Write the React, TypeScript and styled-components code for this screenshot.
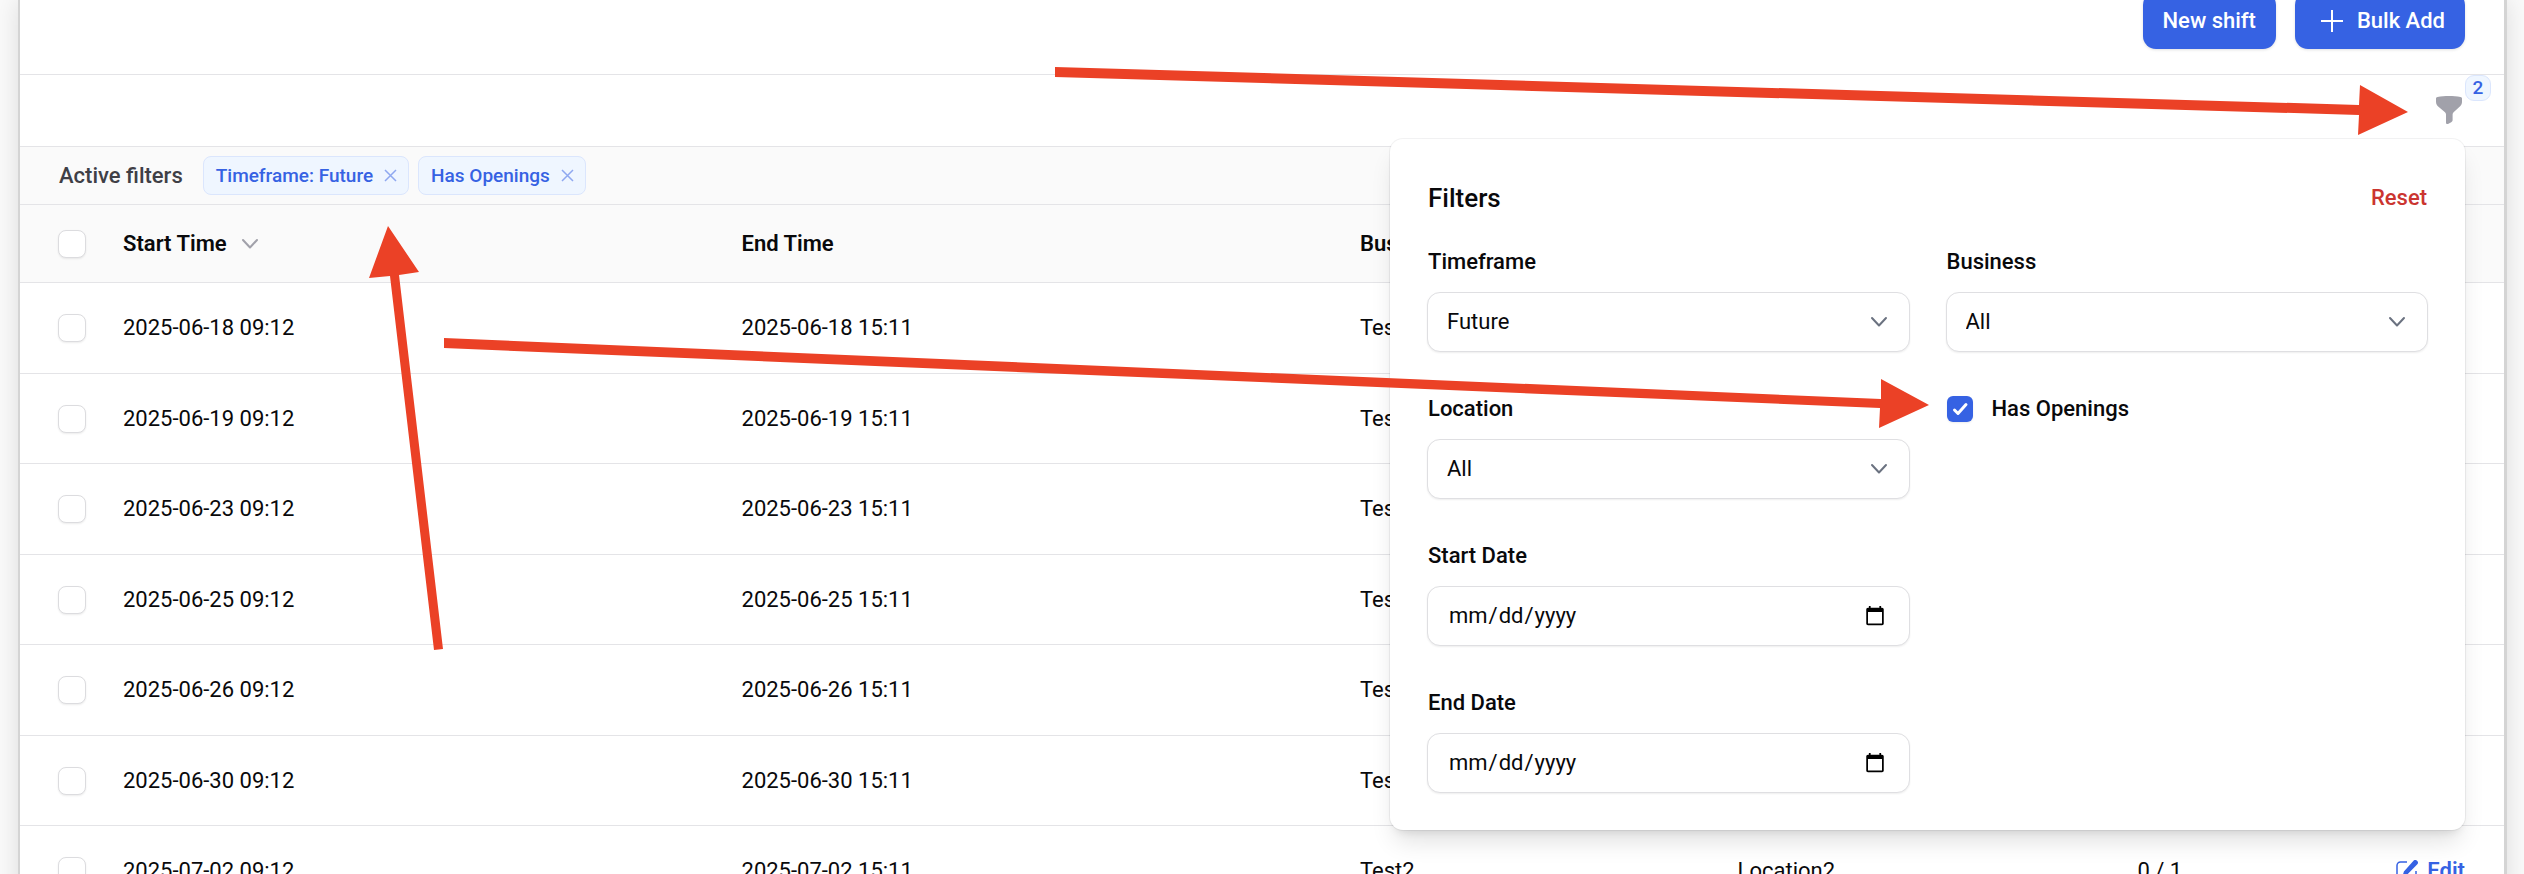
import React, { useState } from "react";
import styled, { createGlobalStyle, css } from "styled-components";

const GlobalStyle = createGlobalStyle`
  * { box-sizing: border-box; }
  html, body, #root { height: 100%; }
  body {
    margin: 0;
    overflow: hidden;
    background: #fafafa;
    color: #09090b;
    font: 400 22px/34px Roboto, "Liberation Sans", sans-serif;
  }
  button, input, select { font: inherit; color: inherit; }
`;

const Page = styled.div`
  position: relative;
  height: 100%;
  padding: 0 17px 0 18px;
  overflow: hidden;
`;

const Card = styled.main`
  min-height: 100%;
  background: #fff;
  border: solid #d4d4d4;
  border-width: 0 3px 0 2px;
  box-shadow: 0 0 24px rgba(0, 0, 0, 0.12);
`;

const Actions = styled.header`
  display: flex;
  justify-content: flex-end;
  gap: 19px;
  height: 75px;
  padding: 0 39px 25px;
  align-items: flex-end;
  border-bottom: 1px solid #e4e4e7;
`;

const PrimaryButton = styled.button`
  display: flex;
  align-items: center;
  gap: 14px;
  height: 57px;
  padding: 0 20px;
  border: 0;
  border-radius: 13px;
  background: #3662e3;
  color: #fff;
  font-weight: 500;
  box-shadow: 0 1px 3px rgba(0, 0, 0, 0.12);
`;

const Toolbar = styled.div`
  position: relative;
  display: flex;
  justify-content: flex-end;
  align-items: center;
  height: 72px;
  padding: 0 41px 2px;
  border-bottom: 1px solid #e4e4e7;
`;

const FilterButton = styled.button`
  position: relative;
  display: flex;
  padding: 0;
  border: 0;
  background: none;
  color: #a1a1aa;
`;

const pill = css`
  border: 1px solid #dbe6fd;
  background: #eff6ff;
  color: #3662e3;
  font-size: 19px;
  font-weight: 500;
`;

const Count = styled.span`
  ${pill}
  position: absolute;
  left: 30px;
  top: -20px;
  width: 26px;
  line-height: 24px;
  border-radius: 9px;
  text-align: center;
`;

const ActiveFilters = styled.section`
  display: flex;
  align-items: center;
  gap: 9px;
  height: 58px;
  padding: 0 39px;
  background: #fafafa;
  border-bottom: 1px solid #e4e4e7;
`;

const ActiveTitle = styled.span`
  margin-right: 11px;
  color: #3f3f46;
  font-weight: 500;
`;

const Chip = styled.span`
  ${pill}
  display: flex;
  align-items: center;
  gap: 11px;
  height: 39px;
  padding: 0 11px 0 12px;
  border-radius: 8px;
`;

const ChipRemove = styled.button`
  display: flex;
  padding: 0;
  border: 0;
  background: none;
  color: #8fa8f0;
`;

const Table = styled.table`
  width: 100%;
  border-collapse: separate;
  border-spacing: 0;
  table-layout: fixed;
`;

const HeadRow = styled.tr`
  height: 78px;
  background: #fafafa;
`;

const BodyRow = styled.tr`
  height: 91px;
  &:nth-child(even) { height: 90px; }
`;

const cell = css`
  padding: 0;
  text-align: left;
  border-bottom: 1px solid #e4e4e7;
`;

const HeadCell = styled.th<{ $width?: string }>`
  ${cell}
  width: ${(p) => p.$width ?? "auto"};
  font-weight: 600;
`;

const Cell = styled.td`
  ${cell}
`;

const CheckCell = styled(Cell)`
  padding-left: 38px;
`;

const CheckHead = styled(HeadCell)`
  padding-left: 38px;
`;

const SortLabel = styled.span`
  display: flex;
  align-items: center;
  gap: 14px;
`;

const Checkbox = styled.input`
  appearance: none;
  display: block;
  width: 28px;
  height: 28px;
  margin: 0;
  border: 1px solid #dcdcdf;
  border-radius: 8px;
  background: #fff;
  box-shadow: 0 1px 2px rgba(0, 0, 0, 0.08);
  &:checked {
    width: 26px;
    height: 26px;
    border: 0;
    border-radius: 6px;
    background: #3662e3 url("data:image/svg+xml,%3Csvg xmlns='http://www.w3.org/2000/svg' viewBox='0 0 26 26' fill='none' stroke='white' stroke-width='3' stroke-linecap='round' stroke-linejoin='round'%3E%3Cpath d='M7.5 14l3.500 3.500 8-9'/%3E%3C/svg%3E");
  }
`;

const EditCell = styled(Cell)`
  padding-right: 39px;
`;

const EditLink = styled.a`
  display: flex;
  align-items: center;
  justify-content: flex-end;
  gap: 9px;
  color: #3662e3;
  font-weight: 600;
  text-decoration: none;
`;

const Panel = styled.form`
  position: absolute;
  top: 64px;
  right: 39px;
  z-index: 1;
  width: 1075px;
  padding: 37px;
  border-radius: 13px;
  background: #fff;
  box-shadow: 0 0 0 1px rgba(9, 9, 11, 0.05), 0 16px 24px -5px rgba(0, 0, 0, 0.12),
    0 7px 10px -6px rgba(0, 0, 0, 0.12);
`;

const PanelHead = styled.div`
  display: flex;
  align-items: center;
  justify-content: space-between;
  height: 44px;
  margin-bottom: 25px;
  padding: 0 1px;
`;

const PanelTitle = styled.h2`
  margin: 0;
  font-size: 26px;
  font-weight: 500;
`;

const ResetButton = styled.button`
  padding: 0;
  border: 0;
  background: none;
  color: #cb3530;
  font-weight: 500;
`;

const Fields = styled.div`
  display: grid;
  grid-template-columns: 1fr 1fr;
  gap: 40px 36px;
`;

const Field = styled.div<{ $full?: boolean }>`
  display: flex;
  flex-direction: column;
  gap: 13px;
  grid-column: ${(p) => (p.$full ? "1" : "auto")};
`;

const Label = styled.label`
  padding-left: 1px;
  font-weight: 500;
`;

const CheckField = styled.div`
  display: flex;
  gap: 18px;
  height: 34px;
  padding-left: 1px;
  align-items: center;
`;

const Control = styled.div`
  position: relative;
  display: flex;
  align-items: center;
  color: #6b7280;
  svg {
    position: absolute;
    right: 22px;
    pointer-events: none;
  }
`;

const box = css`
  width: 100%;
  height: 60px;
  border: 1px solid #dfdfe2;
  border-radius: 13px;
  background: #fff;
  color: #09090b;
  box-shadow: 0 1px 2px rgba(0, 0, 0, 0.07);
`;

const Select = styled.select`
  ${box}
  appearance: none;
  padding: 0 19px;
`;

const DateInput = styled.input`
  ${box}
  padding: 0 21px 0 20px;
`;

const Annotations = styled.svg`
  position: absolute;
  left: 0;
  top: 0;
  z-index: 2;
  pointer-events: none;
`;

const Chevron = ({ color }: { color: string }) => (
  <svg width="18" height="12" viewBox="0 0 18 12" fill="none" stroke={color} strokeWidth="2" strokeLinecap="round" strokeLinejoin="round">
    <path d="M2 2l7 7.500L16 2" />
  </svg>
);

const Close = () => (
  <svg width="13" height="13" viewBox="0 0 13 13" fill="none" stroke="currentColor" strokeWidth="1.500">
    <path d="M1 1l11 11M12 1L1 12" />
  </svg>
);

const Plus = () => (
  <svg width="28" height="22" viewBox="0 0 28 22" fill="none" stroke="currentColor" strokeWidth="2">
    <path d="M17 0v22M6 11h22" />
  </svg>
);

const Funnel = () => (
  <svg width="28" height="30" viewBox="0 0 28 30" fill="currentColor">
    <path d="M14 1c4 0 8 .3 11.500.9.900.2 1.500.9 1.500 1.700v3.400c0 1.500-.6 2.900-1.600 4l-6.800 6.200c-.6.600-1 1.400-1 2.300v5.500c0 1-.5 1.800-1.400 2.200l-3.200 1.700c-1 .5-2-.2-2-1.200v-8.200c0-.9-.4-1.700-1-2.300L2.600 11A5.600 5.600 0 0 1 1 7V3.600c0-.8.600-1.500 1.500-1.700C6 1.300 10 1 14 1z" />
  </svg>
);

const EditIcon = () => (
  <svg width="22" height="22" viewBox="0 0 22 22" fill="none">
    <path d="M11 2H4.500A3.500 3.500 0 0 0 1 5.500v12A3.500 3.500 0 0 0 4.500 21h12a3.500 3.500 0 0 0 3.500-3.500V11" stroke="currentColor" strokeWidth="1.500" />
    <path d="M17.300.9a2.600 2.600 0 0 1 3.800 3.700L11 14.800 6.500 16.200 7.900 11.500z" fill="currentColor" />
  </svg>
);

const shifts = ["2025-06-18", "2025-06-19", "2025-06-23", "2025-06-25", "2025-06-26", "2025-06-30", "2025-07-02"];

export default function App() {
  const [openings, setOpenings] = useState(true);
  return (
    <Page>
      <GlobalStyle />
      <Card>
        <Actions>
          <PrimaryButton>New shift</PrimaryButton>
          <PrimaryButton><Plus />Bulk Add</PrimaryButton>
        </Actions>
        <Toolbar>
          <FilterButton aria-label="Filters">
            <Funnel />
            <Count>2</Count>
          </FilterButton>
          <Panel>
            <PanelHead>
              <PanelTitle>Filters</PanelTitle>
              <ResetButton type="button">Reset</ResetButton>
            </PanelHead>
            <Fields>
              <Field>
                <Label htmlFor="timeframe">Timeframe</Label>
                <Control><Select id="timeframe"><option>Future</option></Select><Chevron color="#6b7280" /></Control>
              </Field>
              <Field>
                <Label htmlFor="business">Business</Label>
                <Control><Select id="business"><option>All</option></Select><Chevron color="#6b7280" /></Control>
              </Field>
              <Field>
                <Label htmlFor="location">Location</Label>
                <Control><Select id="location"><option>All</option></Select><Chevron color="#6b7280" /></Control>
              </Field>
              <CheckField>
                <Checkbox id="openings" type="checkbox" checked={openings} onChange={(e) => setOpenings(e.target.checked)} />
                <Label htmlFor="openings">Has Openings</Label>
              </CheckField>
              <Field $full>
                <Label htmlFor="start">Start Date</Label>
                <DateInput id="start" type="date" />
              </Field>
              <Field $full>
                <Label htmlFor="end">End Date</Label>
                <DateInput id="end" type="date" />
              </Field>
            </Fields>
          </Panel>
        </Toolbar>
        <ActiveFilters>
          <ActiveTitle>Active filters</ActiveTitle>
          <Chip>Timeframe: Future<ChipRemove aria-label="Remove Timeframe filter"><Close /></ChipRemove></Chip>
          <Chip>Has Openings<ChipRemove aria-label="Remove Has Openings filter"><Close /></ChipRemove></Chip>
        </ActiveFilters>
        <Table>
          <thead>
            <HeadRow>
              <CheckHead $width="103px"><Checkbox type="checkbox" aria-label="Select all shifts" /></CheckHead>
              <HeadCell $width="24.9%"><SortLabel>Start Time<Chevron color="#a1a1aa" /></SortLabel></HeadCell>
              <HeadCell $width="24.9%">End Time</HeadCell>
              <HeadCell $width="15.2%">Business</HeadCell>
              <HeadCell $width="16.1%">Location</HeadCell>
              <HeadCell $width="8%">Openings</HeadCell>
              <HeadCell />
            </HeadRow>
          </thead>
          <tbody>
            {shifts.map((day) => (
              <BodyRow key={day}>
                <CheckCell><Checkbox type="checkbox" aria-label={`Select shift ${day}`} /></CheckCell>
                <Cell>{day} 09:12</Cell>
                <Cell>{day} 15:11</Cell>
                <Cell>Test2</Cell>
                <Cell>Location2</Cell>
                <Cell>0 / 1</Cell>
                <EditCell><EditLink href="#edit"><EditIcon />Edit</EditLink></EditCell>
              </BodyRow>
            ))}
          </tbody>
        </Table>
      </Card>
      <Annotations width="2524" height="874" viewBox="0 0 2524 874" fill="#eb4126" aria-hidden="true">
        <path d="M1055 67l1304 38 1-20 48 27-50 23 1-20-1304-38z" />
        <path d="M444 338l1437 61 0-20 48 26-50 23 1-20-1436-60z" />
        <path d="M388 226l31 46-20 3 44 374-9 1-44-374-21 2z" />
      </Annotations>
    </Page>
  );
}
